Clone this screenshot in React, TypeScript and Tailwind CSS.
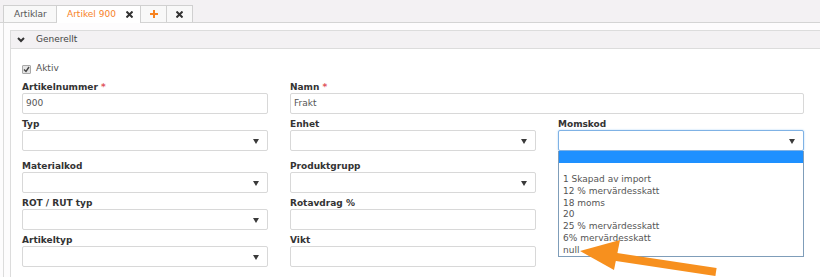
import React from "react";

const Arrow = () => (
  <svg width="6" height="5" viewBox="0 0 6 5" className="absolute right-[8px] top-[8px]">
    <path d="M0 0 L6 0 L3 5 Z" fill="#3a3a3a" />
  </svg>
);

function Label({ text, req }: { text: string; req?: boolean }) {
  return (
    <div className="h-[12px] leading-[12px] font-bold text-[#333]">
      {text}
      {req && <span className="text-[#e0545c] font-bold"> *</span>}
    </div>
  );
}

function Input({ value }: { value?: string }) {
  return (
    <div className="h-[21px] border border-[#d8d8d8] rounded-[2px] bg-white pl-[3px] leading-[19px] text-[#555]">
      {value}
    </div>
  );
}

function Select({ focus }: { focus?: boolean }) {
  return (
    <div
      className={
        focus
          ? "relative h-[21px] border border-[#7fb2e5] rounded-[2px] bg-white shadow-[0_0_2px_#a9d0f5]"
          : "relative h-[21px] border border-[#d8d8d8] rounded-[2px] bg-white"
      }
    >
      <Arrow />
    </div>
  );
}

const Cross = () => (
  <svg width="7" height="7" viewBox="0 0 7 7">
    <path d="M0.5 0.5 L6.5 6.5 M6.5 0.5 L0.5 6.5" stroke="#333" strokeWidth="2" />
  </svg>
);

export default function App() {
  const items = [
    "",
    "",
    "1 Skapad av import",
    "12 % mervärdesskatt",
    "18 moms",
    "20",
    "25 % mervärdesskatt",
    "6% mervärdesskatt",
    "null",
  ];
  return (
    <div className="relative w-[820px] h-[277px] overflow-hidden bg-[#fdfcfd] font-['DejaVu_Sans',sans-serif] text-[9px]">
      {/* tab bar */}
      <div className="h-[23px] bg-[#f3f1f3] border-b border-[#d4d4d4] flex items-end pl-[3px]">
        <div className="h-[17px] w-[54px] border border-b-0 border-[#d0d0d0] bg-[#f8f8f8] pl-[10px] leading-[16px] text-[#555]">
          Artiklar
        </div>
        <div className="h-[18px] w-[84px] -mb-px border border-b-0 border-l-0 border-[#d0d0d0] bg-white pl-[10px] leading-[16px] text-[#f7821f] flex items-start">
          <span>Artikel 900</span>
          <span className="ml-[10px] mt-[5px] flex">
            <Cross />
          </span>
        </div>
        <div className="h-[17px] w-[26px] border border-b-0 border-l-0 border-[#d0d0d0] bg-[#f8f8f8] flex items-center justify-center">
          <svg width="8" height="8" viewBox="0 0 8 8">
            <path d="M4 0 V8 M0 4 H8" stroke="#f7821f" strokeWidth="2" />
          </svg>
        </div>
        <div className="h-[17px] w-[26px] border border-b-0 border-l-0 border-[#d0d0d0] bg-[#f8f8f8] flex items-center justify-center">
          <Cross />
        </div>
      </div>

      {/* content */}
      <div className="ml-[3px] h-[254px] border-l border-[#dcdcdc] pt-[7px] pl-[6px]">
        <div className="border-l border-[#dcdcdc] h-full bg-white">
          <div className="h-[19px] border-y border-[#dcdcdc] bg-[#f3f1f3] flex items-center pl-[5px] text-[#444]">
            <svg width="8" height="6" viewBox="0 0 8 6" className="ml-[1px]">
              <path d="M1 1 L4 4 L7 1" stroke="#333" strokeWidth="2" fill="none" />
            </svg>
            <span className="ml-[11px]">Generellt</span>
          </div>
          <div className="pl-[11px] pt-[14px]">
            <div className="h-[12px] flex items-center text-[#555]">
              <span className="w-[9px] h-[9px] border border-[#a8a8a8] bg-[#e4e4e4] rounded-[1px] flex items-center justify-center">
                <svg width="7" height="7" viewBox="0 0 7 7">
                  <path d="M1 3.5 L3 5.5 L6 1" stroke="#444" strokeWidth="1.4" fill="none" />
                </svg>
              </span>
              <span className="ml-[5px]">Aktiv</span>
            </div>
            <div className="mt-[6px] grid grid-cols-[246px_246px_246px] gap-x-[22px] gap-y-[4px]">
              <div>
                <Label text="Artikelnummer" req />
                <Input value="900" />
              </div>
              <div className="col-span-2">
                <Label text="Namn" req />
                <Input value="Frakt" />
              </div>

              <div className="mb-[5px]">
                <Label text="Typ" />
                <Select />
              </div>
              <div className="mb-[5px]">
                <Label text="Enhet" />
                <Select />
              </div>
              <div className="mb-[5px] relative">
                <Label text="Momskod" />
                <Select focus />
                <div className="absolute z-10 left-0 top-[33px] w-[246px] border border-[#7f9db9] border-t-0 bg-white">
                  {items.map((t, i) => (
                    <div
                      key={i}
                      className={
                        i === 0
                          ? "h-[11.7px] bg-[#1e90ff]"
                          : "h-[11.7px] leading-[11.7px] pl-[4px] text-[#555]"
                      }
                    >
                      {t}
                    </div>
                  ))}
                </div>
              </div>

              <div>
                <Label text="Materialkod" />
                <Select />
              </div>
              <div>
                <Label text="Produktgrupp" />
                <Select />
              </div>
              <div />

              <div>
                <Label text="ROT / RUT typ" />
                <Select />
              </div>
              <div>
                <Label text="Rotavdrag %" />
                <Input />
              </div>
              <div />

              <div>
                <Label text="Artikeltyp" />
                <Select />
              </div>
              <div>
                <Label text="Vikt" />
                <Input />
              </div>
              <div />
            </div>
          </div>
        </div>
      </div>

      {/* orange annotation arrow */}
      <svg className="absolute left-0 top-0 z-20 pointer-events-none" width="820" height="277">
        <path d="M716 272 L610 256" stroke="#f7901e" strokeWidth="8" strokeLinecap="butt" />
        <path d="M580 251 L620 240 L614 270 Z" fill="#f7901e" />
      </svg>
    </div>
  );
}
